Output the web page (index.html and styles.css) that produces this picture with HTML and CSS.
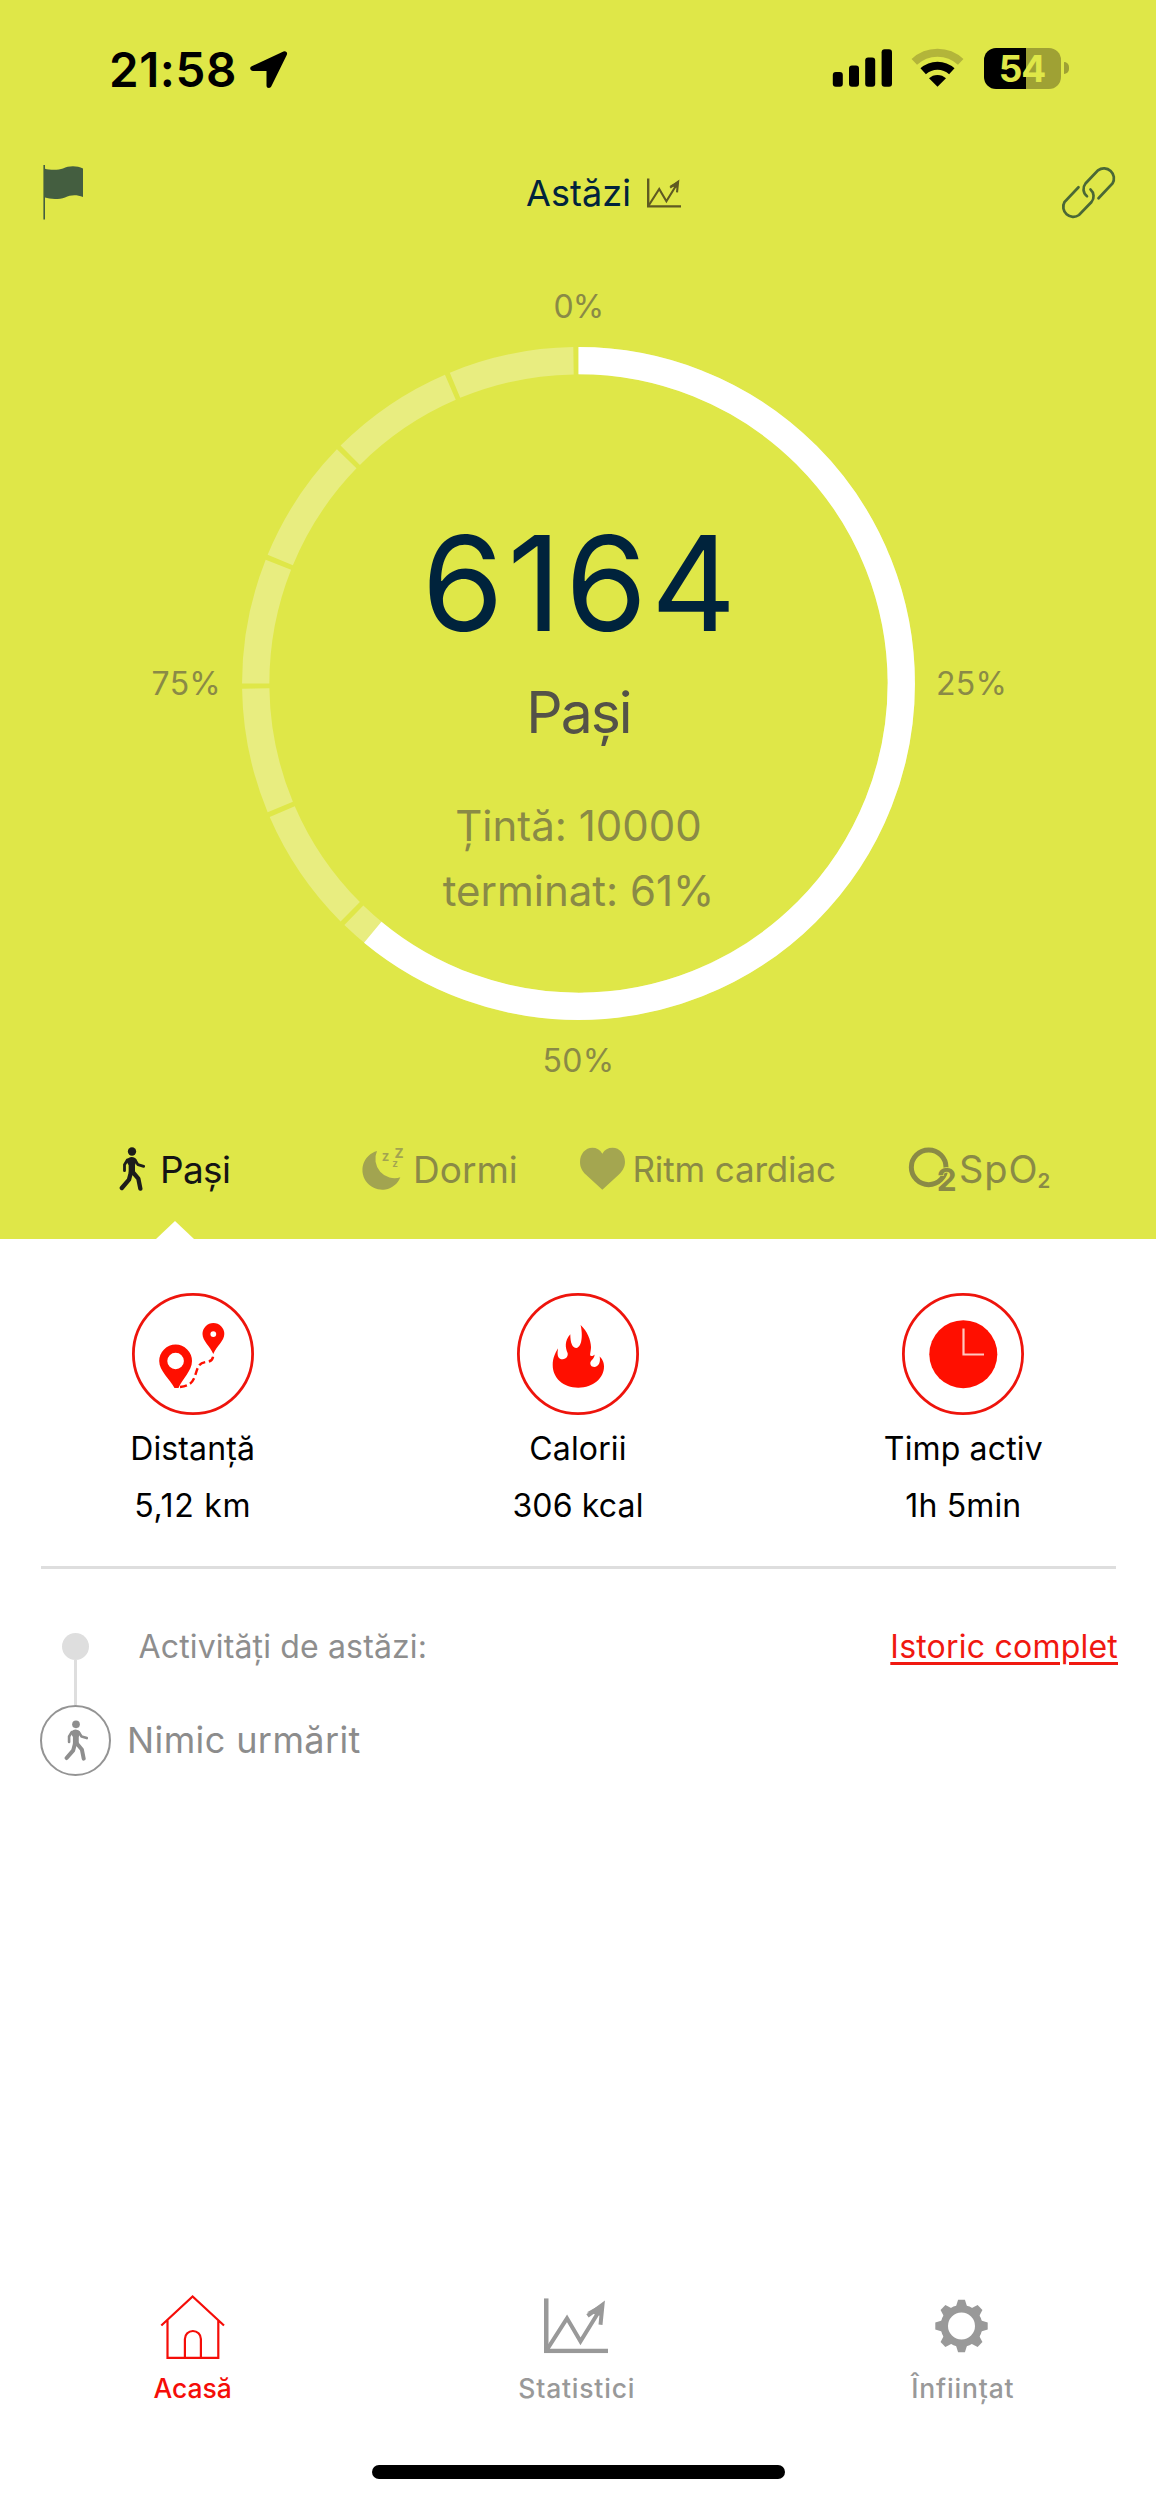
FILE: index.html
```html
<!DOCTYPE html>
<html lang="ro">
<head>
<meta charset="utf-8">
<title>Pași</title>
<link rel="stylesheet" href="styles.css">
</head>
<body>
<svg class="defs" aria-hidden="true">
  <symbol id="walk" viewBox="115 81 78 132">
    <circle cx="154" cy="94.500" r="12.500"/>
    <path d="M136 122Q143 111 153 111Q163 111 168 120L163 136V158H144V136Z"/>
    <path class="limb" stroke-width="8.500" d="M140 120L131.500 134V152M163 120L172 134L189 139"/>
    <path class="limb" stroke-width="13" d="M151 156L145 179L123.500 204M156 156L173 176L179 206"/>
  </symbol>
  <symbol id="chart" viewBox="0 0 64 55">
    <path d="M0 0H4.500V50.500H64V55H0Z"/>
    <path class="line" d="M2.500 52L23 20L36.500 43L56 11.500M43.500 17.500L58.500 6.500L56.500 26.500"/>
    <path d="M43 14L59.500 5L58 18Z"/>
  </symbol>
</svg>

<main class="screen">
  <section class="hero">
    <div class="status">
      <span class="time">21:58</span>
      <svg class="locate" viewBox="249 49 40 40"><path d="M284.500 53.800L252.800 68.500H269V85.500Z"/></svg>
      <svg class="signal" viewBox="832 48 134 40">
        <rect x="832.800" y="72" width="10" height="14.700" rx="3"/>
        <rect x="849" y="65.500" width="10" height="21.200" rx="3"/>
        <rect x="865.200" y="57.500" width="10" height="29.200" rx="3"/>
        <rect x="881.600" y="49.300" width="10.400" height="37.400" rx="3"/>
        <path class="arc dim" d="M914.300 61.800A34 34 0 0 1 960.700 61.800"/>
        <path class="arc" d="M923.200 71.300A21 21 0 0 1 951.800 71.300"/>
        <path d="M937.500 86.700L929 78.300A12.300 12.300 0 0 1 946 78.300Z"/>
      </svg>
      <span class="battery">54</span>
      <span class="nub"></span>
    </div>

    <header class="bar">
      <svg class="flag" viewBox="40 164 48 60">
        <path d="M43.400 166H45V169.700C49 171 58 171.500 63 169.500C69 166.500 77 166.500 83 169.600V198C77 195.500 71 195.500 65 198.400C59 200.600 50 200.300 45 198.500V220.500H43.400Z"/>
      </svg>
      <h1 class="title">Astăzi <svg class="mini-chart"><use href="#chart"/></svg></h1>
      <svg class="link" viewBox="1058 164 60 58">
        <path d="M1098.500 198.300L1112.500 183.500A10 10 0 0 0 1098 170.300L1085.500 183.500A9 9 0 0 0 1087 196.300M1078.500 187.300L1064.500 202A10 10 0 0 0 1079 215L1091.500 202A9 9 0 0 0 1090.500 189.500"/>
      </svg>
    </header>

    <div class="dial">
      <span class="pct top">0%</span>
      <span class="pct left">75%</span>
      <div class="ring">
        <svg viewBox="0 0 673 673">
          <g transform="rotate(-90 336.500 336.500)">
            <circle class="track" cx="336.500" cy="336.500" r="322.800" pathLength="1600"/>
            <circle class="value" cx="336.500" cy="336.500" r="322.800" pathLength="100"/>
          </g>
        </svg>
        <div class="readout">
          <strong class="count">6164</strong>
          <span class="unit">Pași</span>
          <span class="goal">Țintă: 10000</span>
          <span class="goal">terminat: 61%</span>
        </div>
      </div>
      <span class="pct right">25%</span>
      <span class="pct bottom">50%</span>
    </div>

    <nav class="tabs">
      <a class="tab active"><svg class="i-walk"><use href="#walk"/></svg>Pași</a>
      <a class="tab sleep">
        <svg class="i-moon" viewBox="849 80 126 128">
          <path d="M891 89A59 59 0 1 0 961 168A58 58 0 0 1 891 89Z"/>
          <text x="905" y="119" font-size="40">z</text>
          <text x="943" y="111" font-size="51">z</text>
          <text x="936.500" y="137" font-size="30">z</text>
        </svg>Dormi</a>
      <a class="tab heart">
        <svg class="i-heart" viewBox="60 82 135 130"><path d="M127 210L78 165C64 152 60 140 60 126C60 103 76 84 97 84C110 84 120 90 127 102C134 90 144 84 158 84C179 84 195 103 195 126C195 140 190 152 176 165Z"/></svg>Ritm cardiac</a>
      <a class="tab oxygen">
        <svg class="i-o2" viewBox="1048 80 144 134"><circle cx="1107" cy="141" r="52"/><text x="1131" y="212">2</text></svg>SpO<sub>2</sub></a>
    </nav>
    <i class="pointer"></i>
  </section>

  <section class="stats">
    <div class="stat">
      <svg viewBox="132 1293 122 122">
        <circle class="rim" cx="193" cy="1354" r="59.600"/>
        <path fill-rule="evenodd" d="M174.500 1388C170 1379 159.200 1371 159.200 1361A16.400 16.400 0 0 1 192 1361C192 1371 182 1379 178.500 1388ZM175.600 1352.700A8.300 8.300 0 1 0 175.600 1369.300A8.300 8.300 0 1 0 175.600 1352.700Z"/>
        <path fill-rule="evenodd" d="M213.300 1354C210 1346 202.500 1341 202.500 1334A10.900 10.900 0 0 1 224.300 1334C224.300 1341 216.500 1346 213.300 1354ZM213.300 1331.200A2.900 2.900 0 1 0 213.300 1337A2.900 2.900 0 1 0 213.300 1331.200Z"/>
        <path class="trail" d="M180 1387C190 1386 193 1382 195 1376C198 1366 199 1363 206 1362C211 1361.500 213.300 1360 213.300 1354"/>
      </svg>
      <span>Distanță</span><span class="km">5,12 km</span>
    </div>
    <div class="stat">
      <svg viewBox="517.700 1293 122 122">
        <circle class="rim" cx="578.700" cy="1354" r="59.600"/>
        <path d="M558.800 1348.300C557 1357 560 1359.500 563.400 1359.300C567 1359 569 1356 568.300 1353C566 1348 565 1341 571 1334.300C571 1343 573 1348 577.100 1348C583 1347 583.500 1334 581.300 1325C588 1331 591.500 1340 591.700 1347C591.500 1352 590.500 1354 591 1355.500C592.500 1356.500 594 1356 595.300 1354.500C595.300 1359 591 1360 591 1363.500C591 1366 593 1367 595.500 1367C599.500 1366.500 601.500 1361.500 600.300 1356.500C604 1360 604.700 1363.500 604.700 1366.500C604.700 1378 594 1387.700 579 1387.700C564 1387.700 553.400 1378 553.400 1365C553.400 1358 556 1353 558.800 1348.300Z"/>
      </svg>
      <span>Calorii</span><span>306 kcal</span>
    </div>
    <div class="stat">
      <svg viewBox="902 1293 122 122">
        <circle class="rim" cx="963" cy="1354" r="59.600"/>
        <circle cx="963.300" cy="1354.200" r="34"/>
        <path class="hands" d="M963.500 1328.500V1354.500H984"/>
      </svg>
      <span>Timp activ</span><span>1h 5min</span>
    </div>
  </section>

  <section class="log">
    <div class="row first">
      <div class="marker"><i class="dot"></i><i class="stem"></i></div>
      <span class="heading">Activități de astăzi:</span>
      <a class="history">Istoric complet</a>
    </div>
    <div class="row">
      <span class="badge"><svg><use href="#walk"/></svg></span>
      <span class="empty">Nimic urmărit</span>
    </div>
  </section>

  <nav class="bottom-nav">
    <a class="item current">
      <svg viewBox="158.700 2293 68 68"><path class="house" d="M161 2325.500L192.300 2296.500L223.700 2325.500M167.200 2320V2357.800H218V2320M184.600 2357V2339A8 8 0 0 1 200.600 2339V2357"/></svg>
      Acasă</a>
    <a class="item">
      <svg viewBox="544.500 2293 68 68"><use href="#chart" x="544.500" y="2298.300" width="64" height="55"/></svg>
      <span class="shift">Statistici</span></a>
    <a class="item">
      <svg viewBox="-32.500 -33 68 68">
        <circle class="cog" r="17.200"/>
        <g id="pair"><path id="tooth" d="M-6 -18L-3.400 -26.200H3.400L6 -18Z"/><use href="#tooth" transform="rotate(180)"/></g>
        <use href="#pair" transform="rotate(45)"/><use href="#pair" transform="rotate(90)"/><use href="#pair" transform="rotate(135)"/>
      </svg>
      <span class="shift set">Înființat</span></a>
  </nav>
  <div class="home-indicator"></div>
</main>
</body>
</html>
```
FILE: styles.css
```css
* { box-sizing: border-box; }

body {
  margin: 0;
  background: #fff;
  font-family: Inter, "Noto Sans", sans-serif;
  color: #000;
}

svg { display: block; flex: none; overflow: visible; }
.defs { display: none; }
.limb, .line { fill: none; stroke: currentColor; }
.limb { stroke-linecap: round; stroke-linejoin: round; }
.line { stroke-width: 4; }
use, symbol { fill: currentColor; }

.screen {
  width: 1156px;
  height: 2500px;
  display: flex;
  flex-direction: column;
  overflow: hidden;
}

/* Hero */
.hero {
  position: relative;
  height: 1239px;
  background: #dfe748;
}

.status {
  height: 138px;
  padding: 0 87.5px 0 109px;
  display: flex;
  align-items: center;
}
.time { font-size: 47.5px; font-weight: 600; letter-spacing: .58px; }
.locate { width: 40px; height: 40px; margin-left: 12px; }
.locate path { stroke: #000; stroke-width: 5; stroke-linejoin: round; }
.signal { width: 134px; height: 40px; margin: -2px 18px 0 auto; }
.arc { fill: none; stroke: #000; stroke-width: 8; }
.dim { stroke: #b3b53a; }
.battery {
  width: 77px;
  height: 41px;
  margin-top: -2px;
  border-radius: 12px;
  background: linear-gradient(90deg, #000 42px, #9fa134 42px);
  color: #dfe748;
  font-size: 37px;
  font-weight: 700;
  line-height: 41px;
  letter-spacing: -1px;
  text-align: center;
}
.nub {
  width: 4.5px;
  height: 12px;
  margin: -2px 0 0 3.5px;
  border-radius: 0 5px 5px 0;
  background: #9fa134;
}

.bar {
  height: 110px;
  padding: 0 38px 0 40px;
  display: grid;
  grid-template-columns: 486px auto 1fr;
  align-items: center;
}
.flag { width: 48px; height: 60px; fill: #445e40; }
.title {
  margin: 0;
  display: flex;
  align-items: center;
  gap: 16.5px;
  font-size: 36px;
  font-weight: 400;
  letter-spacing: .06px;
  color: #00233c;
}
.mini-chart { width: 34px; height: 30px; color: #5f5a22; }
.link {
  width: 60px;
  height: 58px;
  justify-self: end;
  fill: none;
  stroke: #4a6836;
  stroke-width: 2.7;
  stroke-linecap: round;
}

.dial {
  padding-top: 38.5px;
  display: grid;
  grid-template-columns: 242px 673px 241px;
  grid-template-rows: 40px 673px 40px;
  row-gap: 20.5px;
  align-items: center;
}
.pct { font-size: 32px; line-height: 40px; color: #8a8a46; letter-spacing: .25px; }
.top, .bottom { grid-column: 2; text-align: center; }
.top { letter-spacing: -.8px; }
.left { grid-column: 1; text-align: right; padding-right: 21px; }
.right { padding-left: 21px; }
.ring { display: grid; height: 673px; }
.ring > * { grid-area: 1 / 1; }
.track, .value { fill: none; stroke-width: 27.3; }
.track { stroke: #e8ed80; stroke-dasharray: 96 4; }
.value { stroke: #fff; stroke-dasharray: 61 39; }
.readout {
  padding-top: 186px;
  display: flex;
  flex-direction: column;
  align-items: center;
}
.count {
  font-size: 132px;
  font-weight: 430;
  line-height: 100px;
  letter-spacing: 4px;
  margin-right: -5px;
  color: #00233c;
}
.unit {
  margin: 50px 0;
  font-size: 57px;
  line-height: 60px;
  letter-spacing: -2px;
  color: #545248;
}
.goal { font-size: 42px; line-height: 65px; color: #8a8a46; }

.tabs {
  margin-top: 66px;
  padding-left: 119px;
  display: grid;
  grid-template-columns: 244px 217px 329px auto;
  color: #8a8a46;
}
.tab {
  height: 45px;
  display: flex;
  align-items: center;
  font-size: 37px;
  line-height: 45px;
  white-space: nowrap;
}
.active { gap: 15px; color: #141414; letter-spacing: -.65px; }
.i-walk { width: 26px; height: 44px; color: #1d1d1b; }
.sleep { gap: 8px; }
.i-moon { width: 42px; height: 42.7px; fill: #a2a450; }
.i-moon text { font-weight: 600; }
.heart { gap: 7.5px; font-size: 35px; letter-spacing: -.15px; }
.i-heart { width: 45px; height: 43.3px; fill: #a4a650; }
.oxygen { gap: 2px; font-size: 38px; letter-spacing: .9px; }
.i-o2 { width: 48px; height: 44.7px; }
.i-o2 circle { fill: none; stroke: #8a8a46; stroke-width: 15; }
.i-o2 text {
  font-size: 95px;
  font-weight: 700;
  fill: #8a8a46;
  stroke: #dfe748;
  stroke-width: 4;
  paint-order: stroke;
}
.oxygen sub {
  align-self: flex-end;
  margin: 0 0 -11px -3px;
  font-size: 20.5px;
  font-weight: 600;
}
.pointer {
  position: absolute;
  left: 155.5px;
  bottom: 0;
  border: solid transparent;
  border-width: 0 19px 18.5px;
  border-bottom-color: #fff;
}

/* Daily totals */
.stats {
  padding: 54px 0 32px;
  display: grid;
  grid-template-columns: repeat(3, 1fr);
}
.stat {
  display: flex;
  flex-direction: column;
  align-items: center;
  font-size: 32px;
  line-height: 57px;
  letter-spacing: .15px;
}
.stat svg { width: 122px; height: 122px; margin-bottom: 5px; fill: #ff0f00; }
.stat .km { letter-spacing: .7px; }
.rim, .trail, .hands { fill: none; stroke: #ee140c; stroke-width: 2.8; }
.trail { stroke: #ff0f00; stroke-width: 2.4; stroke-dasharray: 7 3.5; }
.hands { stroke: #ffc8bf; stroke-width: 2.2; }

/* Activity log */
.log {
  margin: 0 38px 0 40px;
}
.log::before {
  content: "";
  display: block;
  height: 3px;
  margin: 0 2.5px 63.5px .5px;
  background: #dedede;
}
.row { display: flex; align-items: center; }
.row.first { height: 72.5px; align-items: flex-start; line-height: 28px; font-size: 32px; }
.marker {
  width: 71px;
  height: 100%;
  display: flex;
  flex-direction: column;
  align-items: center;
}
.dot { width: 27.4px; height: 27.4px; border-radius: 50%; background: #dedede; }
.stem { width: 3px; flex: 1; background: #dedede; }
.heading { margin-left: 27.5px; color: #8e8e8e; letter-spacing: .15px; }
.history {
  margin-left: auto;
  color: #f01810;
  letter-spacing: .22px;
  text-decoration: underline;
  text-decoration-thickness: 3px;
  text-underline-offset: 4px;
}
.badge {
  width: 71px;
  height: 71px;
  border: 2px solid #949494;
  border-radius: 50%;
  display: grid;
  place-items: center;
  color: #8e8e8e;
}
.badge svg { width: 24px; height: 41px; margin-top: -1px; }
.empty { margin: -2px 0 0 16px; font-size: 36px; letter-spacing: .4px; color: #8c8c8c; }

/* Bottom navigation */
.bottom-nav {
  margin-top: auto;
  display: grid;
  grid-template-columns: repeat(3, 1fr);
  color: #999;
}
.item {
  display: flex;
  flex-direction: column;
  align-items: center;
  gap: 12px;
  font-size: 26.5px;
  font-weight: 500;
  line-height: 30px;
}
.item svg { width: 68px; height: 68px; fill: #999; }
.shift { margin-right: 2.5px; letter-spacing: .8px; }
.set { margin-right: 1px; }
.current { color: #f50d08; }
.item .house { fill: none; stroke: #f50d08; stroke-width: 2.2; }
.cog { fill: none; stroke: #999; stroke-width: 7.4; }
.home-indicator {
  width: 413px;
  height: 13.5px;
  margin: 62px auto 21.5px;
  border-radius: 7px;
  background: #000;
}
```
